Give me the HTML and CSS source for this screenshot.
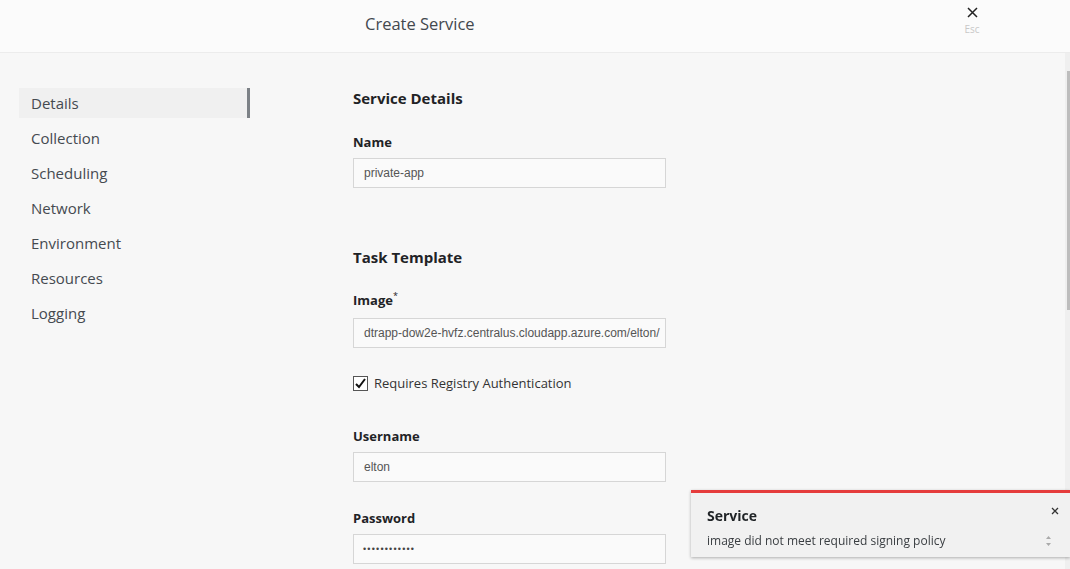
FILE: index.html
```html
<!DOCTYPE html>
<html>
<head>
<meta charset="utf-8">
<link rel="stylesheet" href="styles.css">
</head>
<body>
<header class="top">
  <h1 class="title">Create Service</h1>
  <div class="esc">
    <svg width="11" height="11" viewBox="0 0 11 11"><path d="M1 1L10 10M10 1L1 10" stroke="#222" stroke-width="1.5"/></svg>
    <span>Esc</span>
  </div>
</header>
<div class="body">
  <nav class="side">
    <div class="item active">Details</div>
    <div class="item">Collection</div>
    <div class="item">Scheduling</div>
    <div class="item">Network</div>
    <div class="item">Environment</div>
    <div class="item">Resources</div>
    <div class="item">Logging</div>
  </nav>
  <main class="form">
    <h2 class="sec">Service Details</h2>
    <label class="lbl">Name</label>
    <div class="inp">private-app</div>
    <h2 class="sec sec2">Task Template</h2>
    <label class="lbl">Image<sup>*</sup></label>
    <div class="inp">dtrapp-dow2e-hvfz.centralus.cloudapp.azure.com/elton/</div>
    <div class="check">
      <span class="box"><svg width="13" height="13" viewBox="0 0 13 13"><path d="M2 7L5 10L11 2" fill="none" stroke="#111" stroke-width="2"/></svg></span>
      <span>Requires Registry Authentication</span>
    </div>
    <label class="lbl lbl-user">Username</label>
    <div class="inp">elton</div>
    <label class="lbl lbl-pass">Password</label>
    <div class="inp dots">••••••••••••</div>
  </main>
</div>
<div class="scroll"><div class="thumb"></div></div>
<div class="toast">
  <div class="t-head">
    <span class="t-title">Service</span>
    <svg class="t-close" width="8" height="8" viewBox="0 0 8 8"><path d="M1 1L7 7M7 1L1 7" stroke="#333" stroke-width="1.3"/></svg>
  </div>
  <div class="t-body">
    <span>image did not meet required signing policy</span>
    <svg class="t-arrows" width="7" height="12" viewBox="0 0 7 12"><path d="M3.5 1L6 4H1Z M1 8H6L3.5 11Z" fill="#aaa"/></svg>
  </div>
</div>
</body>
</html>
```
FILE: styles.css
```css
html, body {
  margin: 0;
  padding: 0;
  height: 100%;
  overflow: hidden;
}
body {
  font-family: "Open Sans", "Noto Sans", sans-serif;
  background: #f7f7f7;
  color: #333;
}
.top {
  height: 52px;
  background: #fbfbfb;
  border-bottom: 1px solid #ececec;
  display: flex;
  align-items: flex-start;
  position: relative;
}
.title {
  margin: 0;
  padding-left: 365px;
  font-size: 16.5px;
  font-weight: 400;
  color: #43484e;
  line-height: 20px;
  padding-top: 14px;
}
.esc {
  position: absolute;
  left: 958px;
  top: 6px;
  width: 28px;
  display: flex;
  flex-direction: column;
  align-items: center;
}
.esc svg { margin-top: 1px; }
.esc span {
  font-size: 10px;
  color: #c8c8c8;
  line-height: 12px;
  margin-top: 5px;
}
.body {
  display: flex;
  padding-top: 35px;
}
.side {
  margin-left: 19px;
  width: 231px;
  display: flex;
  flex-direction: column;
  gap: 5px;
}
.item {
  height: 30px;
  line-height: 30px;
  padding-left: 12px;
  font-size: 15px;
  color: #454a50;
  box-sizing: border-box;
}
.item.active {
  background: #f0f0f0;
  border-right: 3px solid #7c8186;
}
.form {
  margin-left: 103px;
  width: 313px;
  display: flex;
  flex-direction: column;
}
.sec {
  margin: 0 0 24px;
  font-size: 15px;
  font-weight: 700;
  line-height: 20px;
  color: #1f2326;
}
.sec2 { margin-top: 59px; margin-bottom: 23px; }
.lbl {
  font-size: 13px;
  font-weight: 700;
  line-height: 20px;
  color: #1f2326;
  margin-bottom: 6px;
}
.lbl sup {
  font-size: 9px;
  font-weight: 400;
  vertical-align: 0;
  position: relative;
  top: -6px;
}
.inp {
  height: 30px;
  box-sizing: border-box;
  border: 1px solid #d6d6d6;
  background: #fafafa;
  font-family: "Liberation Sans", Arial, sans-serif;
  font-size: 12px;
  color: #555;
  line-height: 28px;
  padding-left: 10px;
  white-space: nowrap;
  overflow: hidden;
}
.dots {
  font-size: 9px;
  letter-spacing: 1.2px;
  color: #444;
  padding-left: 9px;
}
.check {
  margin-top: 25px;
  height: 20px;
  display: flex;
  align-items: center;
  gap: 6px;
  font-size: 13px;
  color: #333;
}
.box {
  width: 13px;
  height: 13px;
  border: 1px solid #555;
  background: #fff;
  display: flex;
  align-items: center;
  justify-content: center;
}
.lbl-user { margin-top: 33px; }
.lbl-pass { margin-top: 26px; }
.scroll {
  position: fixed;
  right: 0;
  top: 53px;
  bottom: 0;
  width: 5px;
  background: #efefef;
}
.thumb {
  position: absolute;
  right: 0;
  top: 18px;
  width: 3px;
  height: 239px;
  background: #bdbdbd;
}
.toast {
  position: fixed;
  left: 691px;
  right: 0;
  top: 490px;
  height: 67px;
  background: #f1f1f1;
  border-top: 3px solid #e53c3c;
  box-shadow: 0 1px 3px rgba(0,0,0,0.3);
  padding: 0 14px 0 16px;
  box-sizing: border-box;
}
.t-head {
  display: flex;
  justify-content: space-between;
  align-items: center;
  margin-top: 12px;
  height: 20px;
}
.t-title {
  font-size: 14px;
  font-weight: 700;
  color: #1f2326;
}
.t-close { margin-top: -8px; margin-right: -3px; }
.t-body {
  display: flex;
  justify-content: space-between;
  align-items: center;
  margin-top: 6px;
  font-size: 12px;
  color: #3a3e42;
  height: 18px;
}
.t-arrows { margin-right: 4px; margin-top: 2px; }
```
